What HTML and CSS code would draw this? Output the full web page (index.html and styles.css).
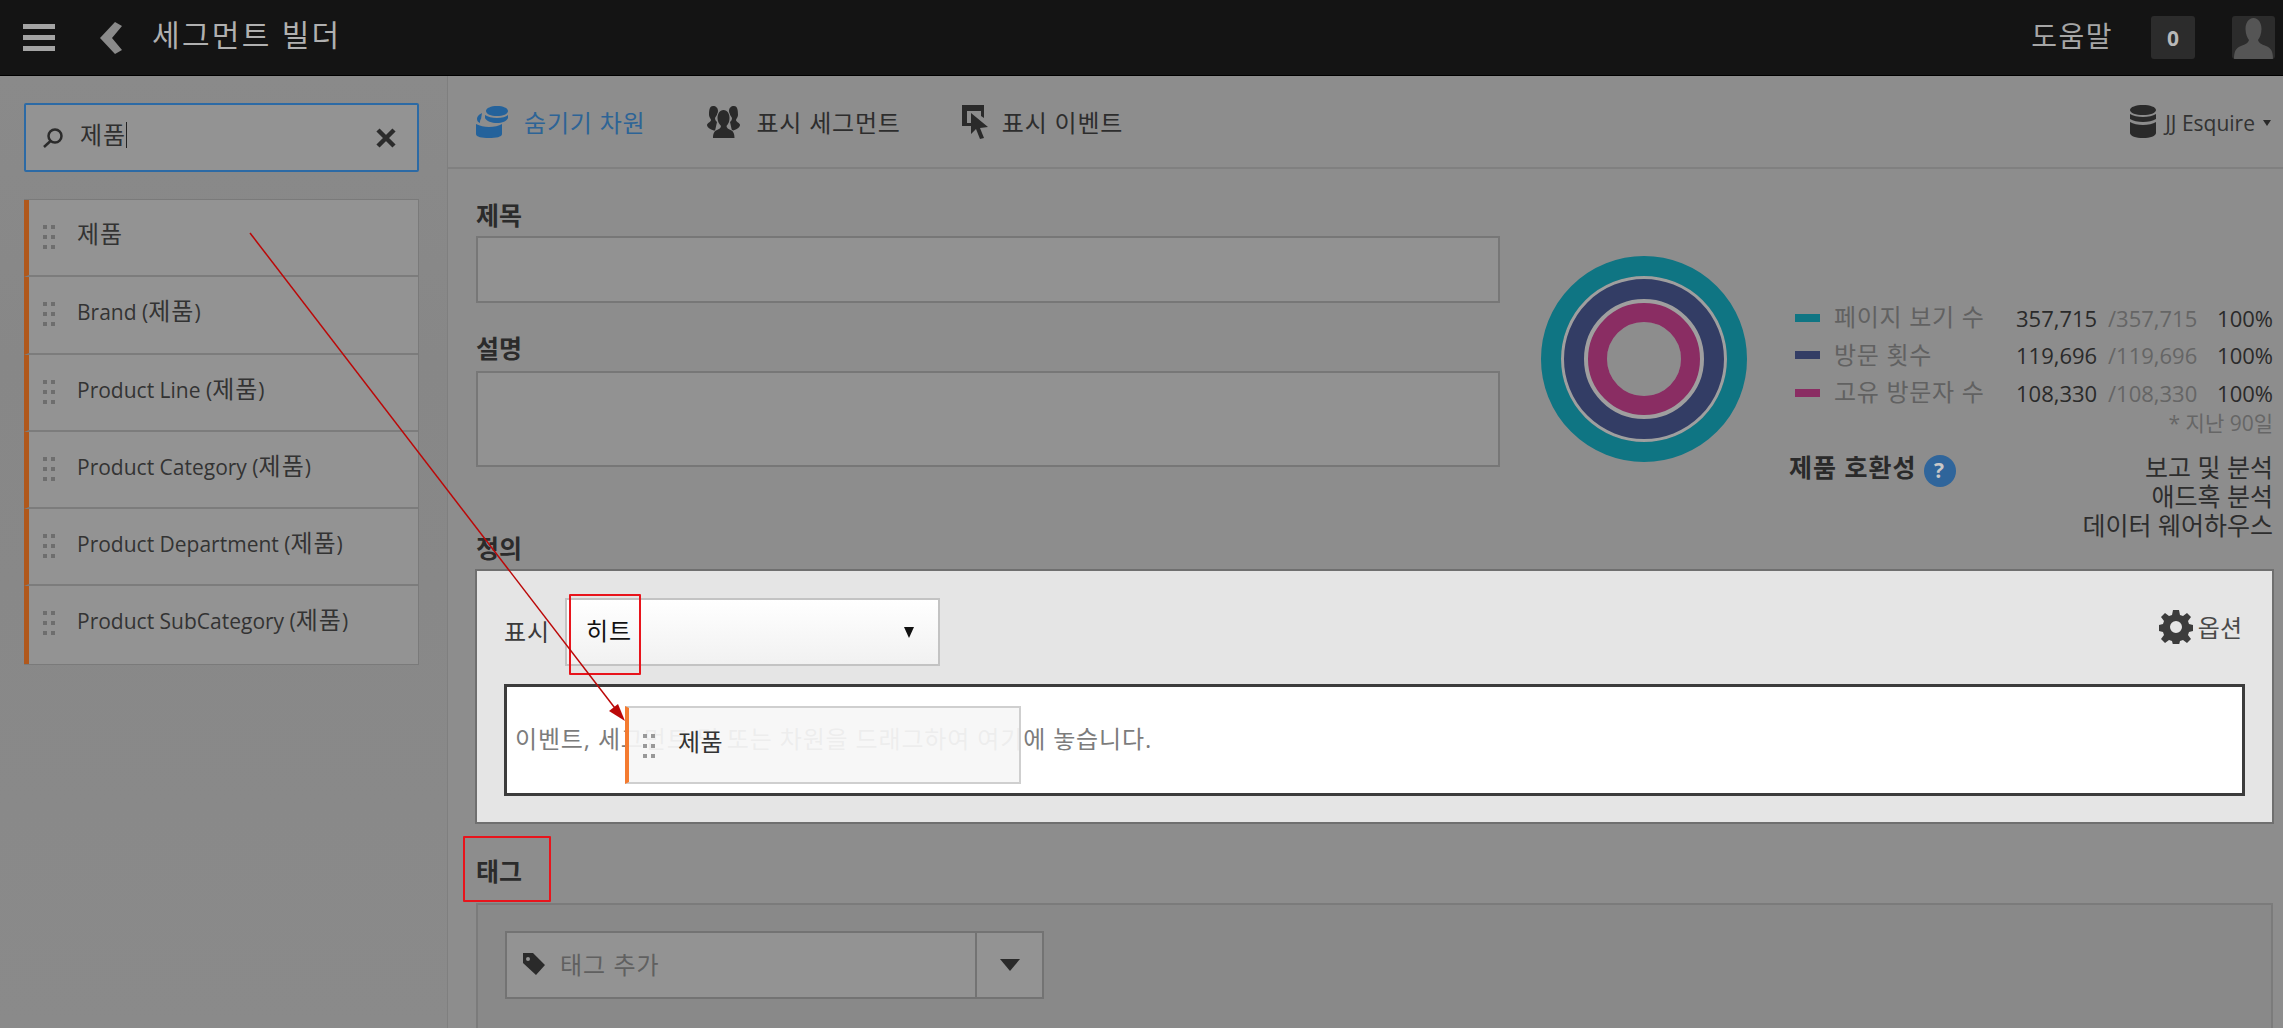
FILE: index.html
```html
<!DOCTYPE html>
<html lang="ko">
<head>
<meta charset="utf-8">
<title>세그먼트 빌더</title>
<link rel="stylesheet" href="styles.css">
</head>
<body>
<div class="app">
  <header class="topbar">
    <svg class="ic-burger" viewBox="0 0 32 27"><path d="M0 0h32v5H0zM0 11h32v5H0zM0 22h32v5H0z"/></svg>
    <svg class="ic-back" viewBox="0 0 22 32"><path d="M15 0l7 4-10 12 10 12-7 4L0 16z"/></svg>
    <h1 class="page-title">세그먼트 빌더</h1>
    <span class="help">도움말</span>
    <span class="badge">0</span>
    <span class="avatar">
      <svg viewBox="0 0 43 43"><path d="M21.500 2c5 0 8 5 8 11 0 5-2 9-3.500 11 1 3 3 4 8 6 5 2 7 5 7 13H2c0-8 2-11 7-13 5-2 7-3 8-6-1.500-2-3.500-6-3.500-11 0-6 3-11 8-11z"/></svg>
    </span>
  </header>
  <div class="body">
    <aside class="sidebar">
      <div class="search">
        <svg class="ic-search" viewBox="0 0 22 20"><circle cx="13" cy="8" r="6.500"/><path d="M8.500 13L2 19"/></svg>
        <span class="search-text">제품</span>
        <svg class="ic-close" viewBox="0 0 20 20"><path d="M2 2l16 16M18 2L2 18"/></svg>
      </div>
      <ul class="dims">
        <li class="dim"><span class="grip"><i></i><i></i><i></i><i></i><i></i><i></i></span><span><span class="ko">제품</span></span></li>
        <li class="dim"><span class="grip"><i></i><i></i><i></i><i></i><i></i><i></i></span><span>Brand (<span class="ko">제품</span>)</span></li>
        <li class="dim"><span class="grip"><i></i><i></i><i></i><i></i><i></i><i></i></span><span>Product Line (<span class="ko">제품</span>)</span></li>
        <li class="dim"><span class="grip"><i></i><i></i><i></i><i></i><i></i><i></i></span><span>Product Category (<span class="ko">제품</span>)</span></li>
        <li class="dim"><span class="grip"><i></i><i></i><i></i><i></i><i></i><i></i></span><span>Product Department (<span class="ko">제품</span>)</span></li>
        <li class="dim"><span class="grip"><i></i><i></i><i></i><i></i><i></i><i></i></span><span>Product SubCategory (<span class="ko">제품</span>)</span></li>
      </ul>
    </aside>
    <main class="main">
      <nav class="toolbar">
        <a class="tool tool-active">
          <svg class="ic-db" viewBox="0 0 33 32"><path d="M21 0c6 0 11 2 11 5s-5 5-11 5-11-2-11-5 5-5 11-5zM9 9c3 2 7 3 12 3s9-1 11-3v3c-1 3-6 5-11 5s-11-2-12-5zM6 7c-2 1-5 3-5 6 0 2 1 3 3 4 0-2 0-3 1-4zM0 18c4 2 8 3 13 3s10-1 13-3v10c0 3-6 4-13 4S0 31 0 28z"/></svg>
          숨기기 차원
        </a>
        <a class="tool">
          <svg class="ic-seg" viewBox="0 0 33 32">
            <path d="M6 0c3 0 5 2 5 5s-2 5-3 7c0 2 1 3 2 4l-2 9c-3-1-8-3-8-6 0-2 4-3 4-5 0-1-2-3-2-5C2 3 3 0 6 0z"/>
            <path d="M27 0c-3 0-5 2-5 5s2 5 3 7c0 2-1 3-2 4l2 9c3-1 8-3 8-6 0-2-4-3-4-5 0-1 2-3 2-5C31 3 30 0 27 0z"/>
            <path class="seg-front" d="M16.500 4c4 0 6 4 6 8 0 3-1 6-3 8 0 2 2 3 4 4 3 1 4 4 4 8H6c0-4 1-7 4-8 2-1 4-2 4-4-2-2-3.500-5-3.500-8 0-4 2-8 6-8z"/>
          </svg>
          표시 세그먼트
        </a>
        <a class="tool">
          <svg class="ic-evt" viewBox="0 0 26 34"><path d="M0 0h22v13l-3-2V6H5v12h4v3H0z"/><path d="M9 8l17 14-8 1 4 10-4 1-4-10-5 5z"/></svg>
          표시 이벤트
        </a>
        <a class="suite">
          <svg class="ic-suite" viewBox="0 0 26 33"><path d="M13 0c7 0 13 2 13 5s-6 5-13 5S0 8 0 5s6-5 13-5zM0 9c3 2 8 3 13 3s10-1 13-3v5c-3 2-8 3-13 3S3 16 0 14zM0 17c3 2 8 3 13 3s10-1 13-3v11c0 3-6 5-13 5S0 31 0 28z"/></svg>
          JJ Esquire
          <svg class="ic-suite-caret" viewBox="0 0 8 6"><path d="M0 0h8L4 6z"/></svg>
        </a>
      </nav>
      <div class="form">
        <div class="top">
          <div class="fields">
            <label class="label label-title">제목</label>
            <div class="input input-title"></div>
            <label class="label label-desc">설명</label>
            <div class="input input-desc"></div>
          </div>
          <svg class="donut" viewBox="0 0 206 206">
            <circle class="ring-gap" cx="103" cy="103" r="60"/>
            <circle class="ring-teal" cx="103" cy="103" r="93"/>
            <circle class="ring-navy" cx="103" cy="103" r="70"/>
            <circle class="ring-plum" cx="103" cy="103" r="46.500"/>
          </svg>
          <div class="meta">
            <div class="legend">
              <span class="swatch swatch-teal"></span><span class="metric">페이지 보기 수</span><span class="num">357,715</span><span class="total">/357,715</span><span class="pct">100%</span>
              <span class="swatch swatch-navy"></span><span class="metric">방문 횟수</span><span class="num">119,696</span><span class="total">/119,696</span><span class="pct">100%</span>
              <span class="swatch swatch-plum"></span><span class="metric">고유 방문자 수</span><span class="num">108,330</span><span class="total">/108,330</span><span class="pct">100%</span>
            </div>
            <div class="period">* 지난 90일</div>
            <div class="compat">
              <div class="compat-title"><b>제품 호환성</b><span class="q">?</span></div>
              <div class="compat-list"><div>보고 및 분석</div><div>애드혹 분석</div><div>데이터 웨어하우스</div></div>
            </div>
          </div>
        </div>
        <div class="label label-def">정의</div>
        <section class="panel">
          <div class="panel-row">
            <span class="show">표시</span>
            <div class="select"><span class="select-text">히트</span><svg class="ic-select" viewBox="0 0 10 11"><path d="M0 0h10L5 11z"/></svg></div>
            <span class="opts">
              <svg class="ic-gear" viewBox="0 0 34 34"><path fill-rule="evenodd" d="M14 0h6l1 5 3 1 4-3 4 4-3 4 1 3 4 1v6l-4 1-1 3 3 4-4 4-4-3-3 1-1 4h-6l-1-4-3-1-4 3-4-4 3-4-1-3-4-1v-6l4-1 1-3-3-4 4-4 4 3 3-1zM17 11a6 6 0 1 0 0 12 6 6 0 0 0 0-12z"/></svg>
              옵션
            </span>
          </div>
          <div class="drop">이벤트, 세그먼트 및 또는 차원을 드래그하여 여기에 놓습니다.</div>
        </section>
        <div class="label label-tag">태그</div>
        <section class="tags">
          <div class="tag-input">
            <div class="tag-field">
              <svg class="ic-tag" viewBox="0 0 24 22"><path fill-rule="evenodd" d="M1 0h10l12 12-9 10L1 10zM6 4a2 2 0 1 0 0 4 2 2 0 0 0 0-4z"/></svg>
              태그 추가
            </div>
            <div class="tag-btn"><svg class="ic-tagcaret" viewBox="0 0 20 12"><path d="M0 0h20L10 12z"/></svg></div>
          </div>
        </section>
      </div>
    </main>
  </div>
  <div class="ghost"><span class="grip grip-ghost"><i></i><i></i><i></i><i></i><i></i><i></i></span><span>제품</span></div>
  <div class="mark mark-hit"></div>
  <div class="mark mark-tag"></div>
  <svg class="arrow" viewBox="0 0 2283 1028">
    <path class="arrow-line" d="M250 233L621 716"/>
    <path class="arrow-head" d="M625 721L609 711L618 704z"/>
  </svg>
</div>
</body>
</html>
```
FILE: styles.css
```css
* { box-sizing: border-box; }
html, body { margin: 0; height: 100%; }
body {
  font-family: "Open Sans", "Noto Sans CJK KR", sans-serif;
  background: #8d8d8d;
  color: #2e2e2e;
  overflow: hidden;
}
svg { display: block; flex: none; }
.app { position: relative; width: 2283px; height: 1028px; overflow: hidden; display: flex; flex-direction: column; }

.topbar { flex: none; height: 76px; background: #141414; border-bottom: 1px solid #000; display: flex; align-items: center; padding-right: 8px; color: #a9a9a9; }
.ic-burger { width: 32px; height: 27px; margin-left: 23px; fill: #a4a4a4; }
.ic-back { width: 22px; height: 32px; margin-left: 45px; fill: #8a8a8a; }
.page-title { margin: 0 0 0 30px; padding-bottom: 6px; font-size: 30px; font-weight: 400; letter-spacing: 2.300px; color: #b0b0b0; flex: 1; line-height: 1; }
.help { font-size: 28px; letter-spacing: 1.500px; padding-bottom: 5px; color: #a6a6a6; margin-right: 38px; }
.badge { width: 44px; height: 43px; background: #2c2c2c; border-radius: 3px; display: flex; align-items: center; justify-content: center; font-size: 21px; font-weight: 700; color: #b8b8b8; margin-right: 37px; }
.avatar { width: 43px; height: 43px; background: #2c2c2c; border-radius: 3px; overflow: hidden; }
.avatar svg { width: 43px; height: 43px; fill: #555; }

.body { flex: 1; min-height: 0; display: flex; }
.sidebar { flex: none; width: 448px; background: linear-gradient(180deg, #8a8a8a, #878787 30%, #8a8a8a); border-right: 1px solid #7f7f7f; padding: 27px 28px 0 24px; }
.search { height: 69px; background: #939393; border: 2px solid #2c6aa5; border-radius: 2px; display: flex; align-items: center; padding: 0 21px 0 16px; }
.ic-search { width: 22px; height: 20px; fill: none; stroke: #2b2b2b; stroke-width: 2.500; }
.search-text { font-size: 24px; letter-spacing: 1px; color: #2f2f2f; margin-left: 16px; padding-bottom: 5px; flex: 1; line-height: 1; }
.search-text::after { content: ""; display: inline-block; width: 1px; height: 26px; background: #222; vertical-align: -4px; }
.ic-close { width: 20px; height: 20px; fill: none; stroke: #2b2b2b; stroke-width: 4.500; }

.dims { list-style: none; margin: 27px 0 0; padding: 0; border: 1px solid #7a7a7a; border-left: 0; }
.dim { height: 77.300px; background: #939393; border-left: 5px solid #b0581c; border-bottom: 2px solid #7c7c7c; display: flex; align-items: flex-start; padding: 20px 0 0 14px; font-size: 21px; color: #333; line-height: 30px; }
.dim:last-child { border-bottom: 0; }
.ko { font-size: 24px; letter-spacing: 1px; line-height: 1; }
.grip { display: grid; grid-template-columns: 4px 4px; gap: 6px 4px; margin-top: 5px; margin-right: 22px; flex: none; }
.grip i { width: 4px; height: 4px; background: #6e6e6e; display: block; }

.main { flex: 1; min-width: 0; }
.toolbar { height: 93px; border-bottom: 2px solid #808080; display: flex; align-items: center; padding: 0 12px 0 28px; gap: 0; background: #8d8d8d; }
.tool { display: flex; align-items: center; font-size: 24px; letter-spacing: .8px; color: #2d2d2d; height: 33px; }
.tool-active { color: #2d6496; margin-right: 62px; }
.tool:nth-child(2) { margin-right: 61px; }
.ic-db { width: 33px; height: 32px; fill: #24629b; margin-right: 15px; }
.ic-seg { width: 33px; height: 32px; fill: #2a2a2a; margin-right: 16px; }
.seg-front { stroke: #8d8d8d; stroke-width: 1.500; paint-order: stroke; }
.ic-evt { width: 26px; height: 34px; fill: #2a2a2a; margin-right: 14px; }
.suite { margin-left: auto; display: flex; align-items: center; font-size: 21px; padding-top: 2px; color: #333; }
.ic-suite { width: 26px; height: 33px; fill: #2a2a2a; margin-right: 9px; margin-top: -2px; }
.ic-suite-caret { width: 8px; height: 6px; fill: #2a2a2a; margin-left: 8px; }

.form { padding: 0 10px 0 28px; }
.top { display: flex; align-items: flex-start; height: 298px; }
.fields { flex: none; width: 1024px; }
.label { display: flex; align-items: flex-end; font-size: 25px; font-weight: 700; color: #2b2b2b; line-height: 1; }
.label-title { height: 67px; padding-bottom: 8px; }
.label-desc { height: 68px; padding-bottom: 10px; }
.input { border: 2px solid #777; background: #929292; }
.input-title { height: 67px; }
.input-desc { height: 96px; }
.donut { width: 206px; height: 206px; margin: 87px 0 0 41px; fill: none; }
.ring-gap { stroke: #9f9f9f; stroke-width: 46; }
.ring-teal { stroke: #0f7583; stroke-width: 20; }
.ring-navy { stroke: #333d65; stroke-width: 20; }
.ring-plum { stroke: #8a2d63; stroke-width: 19; }

.meta { flex: 1; margin: 130px 0 0 42px; }
.legend { display: grid; grid-template-columns: 25px 202px 81px 111px 1fr; grid-auto-rows: 37.500px; align-items: center; font-size: 22px; }
.swatch { width: 25px; height: 8px; justify-self: start; }
.swatch-teal { background: #0f7583; margin-left: 6px; }
.swatch-navy { background: #333d65; margin-left: 6px; }
.swatch-plum { background: #8a2d63; margin-left: 6px; }
.metric { color: #616161; margin-left: 20px; font-size: 24px; letter-spacing: .7px; white-space: nowrap; padding-bottom: 4px; }
.num { color: #2a2a2a; white-space: nowrap; }
.total { color: #656565; margin-left: 11px; white-space: nowrap; }
.pct { color: #2a2a2a; text-align: right; }
.period { text-align: right; color: #666; font-size: 21px; line-height: 26px; margin-top: -2px; }
.compat { display: flex; justify-content: space-between; margin-top: 17px; }
.compat-title { display: flex; align-items: flex-start; font-size: 25px; letter-spacing: 1px; color: #2a2a2a; line-height: 29px; }
.q { width: 32px; height: 32px; border-radius: 50%; background: #2f659b; color: #c8c8c8; display: flex; align-items: center; justify-content: center; font-size: 21px; font-weight: 700; margin-left: 7px; margin-top: 2px; }
.compat-list { text-align: right; font-size: 25px; line-height: 29px; color: #2d2d2d; }

.label-def { height: 103px; padding-bottom: 9px; }
.panel { height: 253px; width: 1797px; background: #e5e5e5; border: 1px solid #fff; outline: 2px solid #6f6f6f; outline-offset: -1px; padding: 27px 27px 0 27px; }
.panel-row { display: flex; align-items: center; height: 68px; }
.show { font-size: 24px; letter-spacing: 1px; color: #3a3a3a; width: 61px; padding-bottom: 4px; }
.select { width: 375px; height: 68px; border: 2px solid #c3c3c3; background: linear-gradient(180deg, #fff, #f1f1f1); display: flex; align-items: center; justify-content: space-between; padding: 0 24px 0 19px; font-size: 24px; letter-spacing: 1px; color: #111; }
.select-text { padding-bottom: 6px; }
.ic-select { width: 10px; height: 11px; fill: #111; }
.opts { margin-left: auto; display: flex; align-items: center; font-size: 24px; color: #4a4a4a; margin-right: 3px; margin-top: -11px; }
.ic-gear { width: 34px; height: 34px; fill: #3c3c3c; margin-right: 5px; }
.drop { height: 112px; margin-top: 18px; background: #fff; border: 3px solid #3c3c3c; display: flex; align-items: center; padding: 0 0 5px 8px; font-size: 24px; letter-spacing: .85px; color: #7c7c7c; white-space: nowrap; }

.label-tag { height: 80px; padding-bottom: 19px; }
.tags { height: 140px; width: 1797px; border: 2px solid #7b7b7b; border-bottom: 0; background: #898989; padding: 26px 0 0 27px; }
.tag-input { width: 539px; height: 68px; display: flex; border: 2px solid #737373; background: #939393; }
.tag-field { flex: 1; display: flex; align-items: center; padding: 0 0 4px 15px; font-size: 24px; letter-spacing: 1px; color: #606060; border-right: 2px solid #737373; }
.ic-tag { width: 24px; height: 22px; fill: #2a2a2a; margin-right: 14px; margin-top: 2px; }
.tag-btn { width: 65px; display: flex; align-items: center; justify-content: center; }
.ic-tagcaret { width: 20px; height: 12px; fill: #2a2a2a; }

.ghost { position: absolute; left: 625px; top: 706px; width: 396px; height: 78px; background: rgba(246,246,246,.92); border: 2px solid #cfcfcf; border-left: 4px solid #f47b30; display: flex; align-items: flex-start; padding: 17px 0 0 14px; font-size: 24px; letter-spacing: .5px; color: #333; line-height: 34px; }
.grip-ghost { margin-top: 9px; margin-right: 23px; }
.grip-ghost i { background: #999; }
.mark { position: absolute; border: 2px solid #e8141c; border-radius: 1px; }
.mark-hit { left: 569px; top: 594px; width: 72px; height: 81px; }
.mark-tag { left: 463px; top: 836px; width: 88px; height: 66px; }
.arrow { position: absolute; left: 0; top: 0; width: 2283px; height: 1028px; pointer-events: none; }
.arrow-line { fill: none; stroke: #bb0808; stroke-width: 1.500; }
.arrow-head { fill: #bb0808; }
```
